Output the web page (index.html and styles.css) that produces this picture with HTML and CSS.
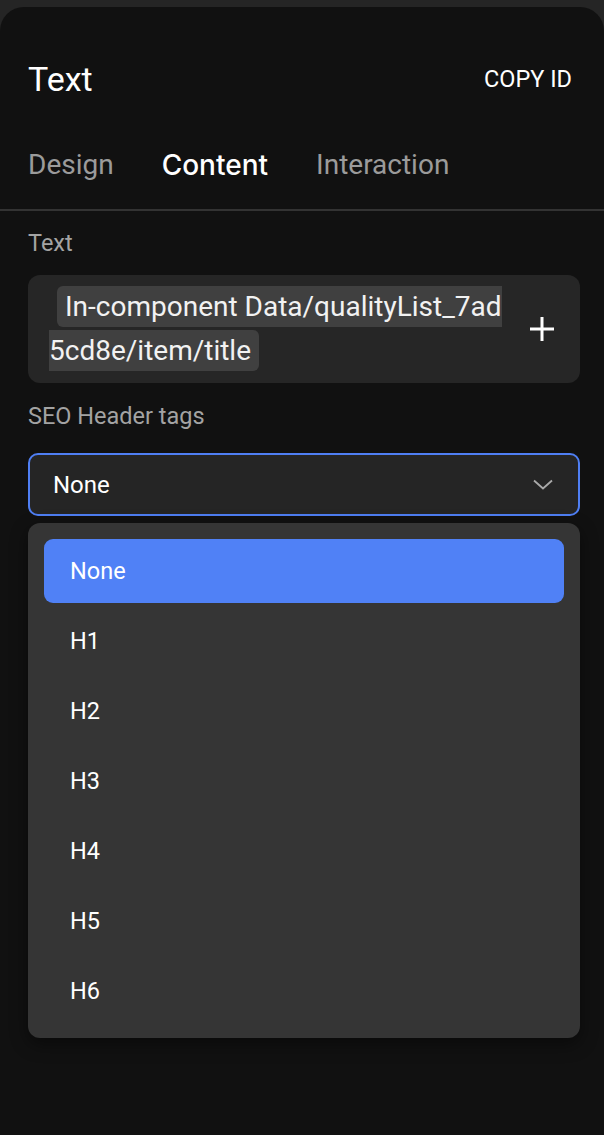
FILE: index.html
```html
<!DOCTYPE html>
<html lang="en">
<head>
<meta charset="utf-8">
<title>Text</title>
<link rel="stylesheet" href="styles.css">
</head>
<body>
<div class="panel">
  <div class="header">
    <div class="title">Text</div>
    <div class="copy-id">COPY ID</div>
  </div>
  <div class="tabs">
    <div class="tab">Design</div>
    <div class="tab active">Content</div>
    <div class="tab">Interaction</div>
  </div>
  <div class="content">
    <div class="label label-text">Text</div>
    <div class="binding">
      <div class="binding-text"><span class="chip">In-component Data/qualityList_7ad5cd8e/item/title</span></div>
      <div class="binding-add">
        <svg width="24" height="24" viewBox="0 0 24 24"><path d="M12 0v24M0 12h24" stroke="#fff" stroke-width="3" fill="none"/></svg>
      </div>
    </div>
    <div class="label label-seo">SEO Header tags</div>
    <div class="select-wrap">
      <div class="select">
        <span class="select-value">None</span>
        <svg class="chevron" width="20" height="11" viewBox="0 0 20 11"><path d="M1 1.5l9 8 9-8" stroke="#a9a9a9" stroke-width="1.8" fill="none"/></svg>
      </div>
      <div class="menu">
        <div class="option selected">None</div>
        <div class="option">H1</div>
        <div class="option">H2</div>
        <div class="option">H3</div>
        <div class="option">H4</div>
        <div class="option">H5</div>
        <div class="option">H6</div>
      </div>
    </div>
  </div>
</div>
</body>
</html>
```

FILE: styles.css
```css
html, body {
  margin: 0;
  padding: 0;
  background: #252525;
  font-family: Roboto, "Liberation Sans", sans-serif;
  color: #fff;
}

.panel {
  margin-top: 7px;
  background: #111111;
  border-radius: 24px 24px 0 0;
  height: 1128px;
}

.header {
  display: flex;
  align-items: center;
  justify-content: space-between;
  padding: 52px 32px 0 28px;
  height: 40px;
}

.title {
  font-size: 34px;
  line-height: 40px;
  font-weight: 400;
}

.copy-id {
  font-size: 23.5px;
  line-height: 30px;
}

.tabs {
  display: flex;
  gap: 48px;
  margin-top: 46px;
  padding: 0 28px 24px;
  border-bottom: 2px solid #333333;
}

.tab {
  font-size: 28px;
  line-height: 40px;
  color: #9b9b9b;
}

.tab.active {
  color: #fff;
  font-family: Inter, Roboto, sans-serif;
  font-weight: 500;
  font-size: 28px;
}

.content {
  padding: 18px 24px 0 28px;
}

.label {
  font-size: 23.5px;
  line-height: 28px;
  color: #a3a3a3;
}

.binding {
  margin-top: 18px;
  display: flex;
  align-items: center;
  background: #262626;
  border-radius: 12px;
  padding: 10px 14px 10px 21px;
  height: 88px;
}

.binding-text {
  flex: 1;
  margin-right: 10px;
  font-size: 28px;
  line-height: 44px;
  word-break: break-all;
  text-indent: 8px;
}

.chip {
  background: #404040;
  border-radius: 6px;
  padding: 4px 8px;
  color: #f2f2f2;
}

.binding-add {
  width: 48px;
  display: flex;
  justify-content: center;
  align-items: center;
}

.binding-add svg {
  display: block;
}

.label-seo {
  margin-top: 19px;
}

.select-wrap {
  position: relative;
  margin-top: 23px;
}

.select {
  display: flex;
  align-items: center;
  justify-content: space-between;
  height: 59px;
  border: 2px solid #4f7ff4;
  border-radius: 10px;
  background: #252525;
  padding: 0 25px 0 23px;
}

.select-value {
  font-size: 24px;
  line-height: 30px;
}

.chevron {
  display: block;
}

.menu {
  position: absolute;
  left: 0;
  right: 0;
  top: calc(100% + 7px);
  background: #353535;
  border-radius: 12px;
  padding: 16px 16px 15px;
  display: flex;
  flex-direction: column;
  gap: 6px;
  box-shadow: 0 6px 18px rgba(0, 0, 0, 0.45);
}

.option {
  height: 64px;
  display: flex;
  align-items: center;
  padding-left: 26px;
  font-size: 23.5px;
  border-radius: 9px;
  color: #fff;
}

.option.selected {
  background: #5081f6;
}
```
